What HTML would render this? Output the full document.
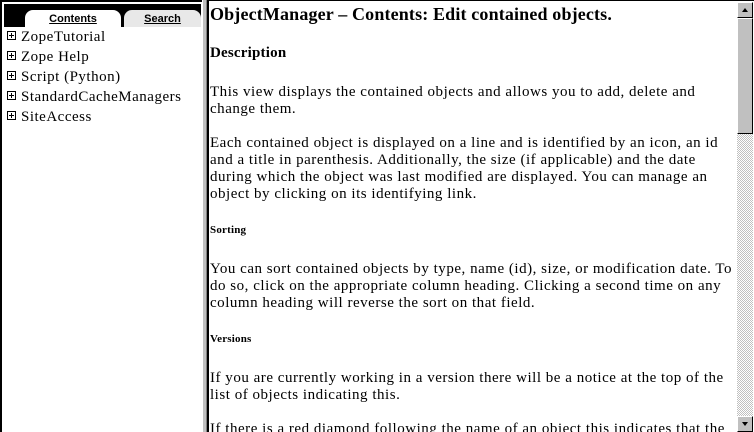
<!DOCTYPE html>
<html><head><style>
html,body{margin:0;width:754px;height:432px;overflow:hidden}
body{background:#fff;font-family:"Liberation Serif",serif;position:relative}
#left{position:absolute;left:0;top:0;width:202px;height:432px;border-left:2px solid #000;border-top:2px solid #000;box-sizing:border-box}
#tabs{position:absolute;left:2px;top:2px;width:197px;height:23px;background:#000}
.tab{position:absolute;top:6px;height:17px;border-radius:8px 8px 0 0;font:bold 11px "Liberation Sans",sans-serif;text-align:center;line-height:19px}
.tab span{text-decoration:underline}
#t1{left:21px;width:96px;background:#fff;color:#000;text-decoration-color:#800080}
#t2{left:120px;width:77px;background:#e8e8e8;color:#000}
#list{position:absolute;left:5px;top:25px;font-size:15px;line-height:20px;letter-spacing:0.5px}
.pl{display:inline-block;width:7px;height:7px;border:1px solid #000;position:relative;margin-right:5px;vertical-align:1px}
.pl:before{content:"";position:absolute;left:1px;top:3px;width:5px;height:1px;background:#000}
.pl:after{content:"";position:absolute;left:3px;top:1px;width:1px;height:5px;background:#000}
#div{position:absolute;left:202px;top:0;width:5px;height:432px;background:#c0c0c0;border-left:1px solid #fff;border-right:1px solid #808080;box-sizing:border-box}
#right{position:absolute;left:207px;top:0;width:547px;height:432px;border-top:1px solid #000;border-left:2px solid #000;box-sizing:border-box;overflow:hidden}
#content{position:absolute;left:1px;top:0;width:528px;font-size:15px;line-height:17px;letter-spacing:0.52px;white-space:nowrap}
h1{font-size:18px;margin:3px 0 0;line-height:20px;letter-spacing:0.15px}
h2{font-size:15px;margin:21px 0 0;letter-spacing:0.2px}
h3{font-size:11px;margin:19px 0 0;letter-spacing:0.2px}
p{margin:17px 0 0}
h2+p,h3+p{margin-top:22px}
#sb{position:absolute;right:1px;top:1px;width:16px;height:430px;background:repeating-conic-gradient(#c0c0c0 0 25%,#fff 0 50%) 0 0/2px 2px}
.btn{position:absolute;left:0;width:16px;height:16px;background:#c0c0c0;border:1px solid;border-color:#fff #000 #000 #fff;box-sizing:border-box}
.thumb{position:absolute;left:0;top:16px;width:16px;height:116px;background:#c0c0c0;border:1px solid;border-color:#fff #000 #000 #fff;box-sizing:border-box}
.ar{position:absolute;left:4px;width:0;height:0;border-left:3px solid transparent;border-right:3px solid transparent}
</style></head><body>
<div id="left">
<div id="tabs"><div class="tab" id="t1"><span>Contents</span></div><div class="tab" id="t2"><span>Search</span></div></div>
<div id="list">
<div><span class="pl"></span>ZopeTutorial</div>
<div><span class="pl"></span>Zope Help</div>
<div><span class="pl"></span>Script (Python)</div>
<div><span class="pl"></span>StandardCacheManagers</div>
<div><span class="pl"></span>SiteAccess</div>
</div>
</div>
<div id="div"></div>
<div id="right">
<div id="content">
<h1>ObjectManager – Contents: Edit contained objects.</h1>
<h2>Description</h2>
<p>This view displays the contained objects and allows you to add, delete and<br>change them.</p>
<p>Each contained object is displayed on a line and is identified by an icon, an id<br>and a title in parenthesis. Additionally, the size (if applicable) and the date<br>during which the object was last modified are displayed. You can manage an<br>object by clicking on its identifying link.</p>
<h3>Sorting</h3>
<p>You can sort contained objects by type, name (id), size, or modification date. To<br>do so, click on the appropriate column heading. Clicking a second time on any<br>column heading will reverse the sort on that field.</p>
<h3>Versions</h3>
<p>If you are currently working in a version there will be a notice at the top of the<br>list of objects indicating this.</p>
<p>If there is a red diamond following the name of an object this indicates that the</p>
</div>
<div id="sb">
<div class="btn" style="top:0"><div class="ar" style="top:5px;border-bottom:4px solid #000"></div></div>
<div class="thumb"></div>
<div class="btn" style="bottom:0"><div class="ar" style="top:5px;border-top:4px solid #000"></div></div>
</div>
</div>
</body></html>
